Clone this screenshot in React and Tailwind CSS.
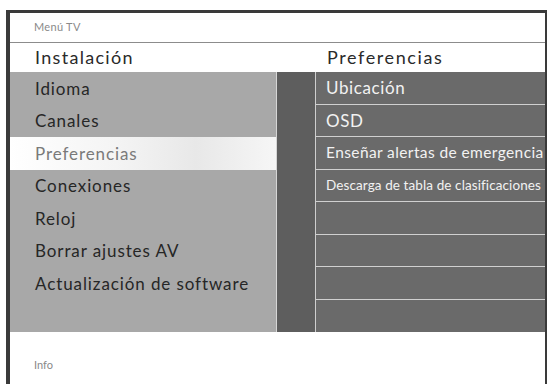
import React from 'react';

const leftItems = [
  "Idioma",
  "Canales",
  "Preferencias",
  "Conexiones",
  "Reloj",
  "Borrar ajustes AV",
  "Actualización de software",
  "",
];

const rightItems = [
  { label: "Ubicación", size: "text-[17px] tracking-[0.6px]" },
  { label: "OSD", size: "text-[17px] tracking-[0.6px]" },
  { label: "Enseñar alertas de emergencia", size: "text-[15.5px] tracking-[0.4px]" },
  { label: "Descarga de tabla de clasificaciones", size: "text-[13.5px] tracking-[0.1px]" },
  { label: "", size: "" },
  { label: "", size: "" },
  { label: "", size: "" },
  { label: "", size: "" },
];

const App = () => {
  return (
    <div className="w-[547px] h-[384px] bg-white pt-[10px] pl-[6px] font-['Lato',sans-serif] overflow-hidden">
      <div className="h-full flex flex-col border-l-4 border-t-[3px] border-r-2 border-[#3a3a3a]">
        {/* top title */}
        <div className="h-[30px] flex items-center pl-[24px] border-b border-[#8c8c8c] shrink-0">
          <span className="text-[11px] text-[#8a8a8a] tracking-[0.3px]">Menú TV</span>
        </div>

        {/* column headers */}
        <div className="h-[29px] flex items-center shrink-0">
          <div className="w-[267px] shrink-0 pl-[25px] text-[18px] text-[#2a2a2a] tracking-[1.3px]">Instalación</div>
          <div className="pl-[50px] text-[18px] text-[#2a2a2a] tracking-[1.6px]">Preferencias</div>
        </div>

        {/* menu body */}
        <div className="h-[260px] flex shrink-0">
          <div className="w-[266px] shrink-0 flex flex-col bg-[#a8a8a8]">
            {leftItems.map((item, i) => (
              <div
                key={i}
                className={
                  item === "Preferencias"
                    ? "h-[32.5px] flex items-center pl-[25px] text-[17px] tracking-[0.9px] text-[#7a7a7a] bg-[linear-gradient(90deg,#ffffff_0%,#f4f4f4_40%,#e8e8e8_70%,#f6f6f6_100%)]"
                    : "h-[32.5px] flex items-center pl-[25px] text-[17px] tracking-[0.9px] text-[#262626]"
                }
              >
                {item}
              </div>
            ))}
          </div>
          <div className="w-px shrink-0 bg-[#d6d6d6]" />
          <div className="w-[39px] shrink-0 bg-[#5e5e5e] border-r border-[#cfcfcf]" />
          <div className="flex-1 min-w-0 overflow-hidden flex flex-col bg-[#6a6a6a]">
            {rightItems.map((item, i) => (
              <div
                key={i}
                className={`h-[32.5px] flex items-center pl-[10px] text-[#f2f2f2] whitespace-nowrap ${item.size} ${
                  i < rightItems.length - 1 ? "border-b border-[#d0d0d0]" : ""
                }`}
              >
                {item.label}
              </div>
            ))}
          </div>
        </div>

        {/* info */}
        <div className="flex-1 flex items-end pl-[24px] pb-[11px]">
          <span className="text-[11px] text-[#8a8a8a]">Info</span>
        </div>
      </div>
    </div>
  );
};

export default App;
